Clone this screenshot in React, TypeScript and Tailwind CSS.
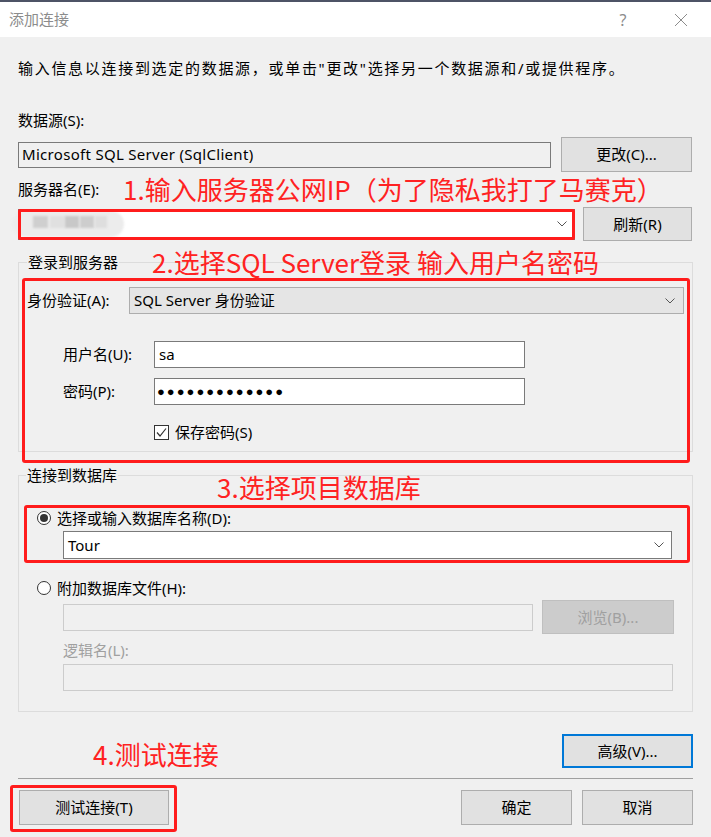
import React from "react";

const ui = { fontFamily: '"Noto Sans", "Noto Sans CJK SC", sans-serif' };
const ann = { fontFamily: '"Noto Sans CJK SC", "Noto Sans", sans-serif' };

function Chevron() {
  return (
    <svg width="10" height="6" viewBox="0 0 10 6" className="shrink-0">
      <polyline points="0.5,0.5 5,5 9.5,0.5" fill="none" stroke="#555" strokeWidth="1" />
    </svg>
  );
}

function Btn({ children, className = "" }: { children: React.ReactNode; className?: string }) {
  return (
    <div
      className={
        "flex items-center justify-center bg-[#e1e1e1] border border-[#adadad] text-[15px] text-black " +
        className
      }
    >
      {children}
    </div>
  );
}

export default function App() {
  return (
    <div className="w-[711px] h-[837px] bg-[#f0f0f0] overflow-hidden text-[15px] text-black" style={ui}>
      <div className="h-[2px] bg-[#4e5366]" />
      <div className="h-[35px] bg-white flex items-center pl-[9px]">
        <span className="text-[15px] text-[#8c8c8c] flex-1">添加连接</span>
        <span className="text-[16px] text-[#8c8c8c] w-[14px] text-center mr-[44px]">?</span>
        <svg width="14" height="14" viewBox="0 0 14 14" className="mr-[23px]">
          <line x1="1" y1="1" x2="13" y2="13" stroke="#8c8c8c" strokeWidth="1" />
          <line x1="13" y1="1" x2="1" y2="13" stroke="#8c8c8c" strokeWidth="1" />
        </svg>
      </div>

      <div className="px-[18px]">
        <div className="mt-[21px] h-[20px] leading-[20px] whitespace-nowrap tracking-[1.7px]">
          输入信息以连接到选定的数据源，或单击"更改"选择另一个数据源和/或提供程序。
        </div>

        <div className="mt-[32px] h-[20px] leading-[20px]">数据源(S):</div>

        <div className="mt-[7px] h-[35px] flex items-center gap-[10px]">
          <div className="w-[533px] h-[26px] border border-[#7a7a7a] bg-[#f0f0f0] flex items-center pl-[3px] text-[15px] tracking-[0.3px]">
            Microsoft SQL Server (SqlClient)
          </div>
          <Btn className="w-[131px] h-[35px]">更改(C)...</Btn>
        </div>

        <div className="mt-[2px] h-[30px] flex items-center">
          <span className="w-[105px] shrink-0">服务器名(E):</span>
          <span className="text-[26px] leading-[30px] text-[#ff2222] whitespace-nowrap" style={ann}>
            1.输入服务器公网IP（为了隐私我打了马赛克）
          </span>
        </div>

        <div className="mt-[3px] h-[34px] flex items-center gap-[8px]">
          <div className="relative w-[557px] h-[31px]">
            <div className="w-full h-full bg-white border border-[#7a7a7a] flex items-center justify-end pr-[7px]">
              <Chevron />
            </div>
            <div className="absolute left-[-6px] top-[2px] w-[112px] h-[26px] rounded-[13px] bg-[#ececec] blur-[1px]" />
            <div className="absolute left-[15px] top-[7px] w-[15px] h-[12px] bg-[#cfcfcf] blur-[1px]" />
            <div className="absolute left-[32px] top-[7px] w-[15px] h-[12px] bg-[#e0e0e0] blur-[1px]" />
            <div className="absolute left-[47px] top-[7px] w-[14px] h-[12px] bg-[#c8c8c8] blur-[1px]" />
            <div className="absolute left-[62px] top-[7px] w-[14px] h-[12px] bg-[#cdcdcd] blur-[1px]" />
            <div className="absolute left-[77px] top-[7px] w-[12px] h-[12px] bg-[#dedede] blur-[1px]" />
            <div className="absolute inset-0 border-[3px] border-[#ff1c1c] rounded-[2px]" />
          </div>
          <Btn className="w-[109px] h-[34px]">刷新(R)</Btn>
        </div>

        {/* Group 1 */}
        <div className="relative mt-[11px]">
          <fieldset className="border border-[#dcdcdc] px-[8px] pb-[11px] pr-[8px]">
            <legend className="px-[1px] h-[20px] leading-[20px]">登录到服务器</legend>
            <div className="mt-[15px] h-[27px] flex items-center">
              <span className="w-[102px]">身份验证(A):</span>
              <div className="flex-1 h-[27px] bg-[#e5e5e5] border border-[#adadad] flex items-center justify-between pl-[4px] pr-[8px]">
                <span>SQL Server 身份验证</span>
                <Chevron />
              </div>
            </div>
            <div className="mt-[27px] h-[27px] flex items-center pl-[36px]">
              <span className="w-[91px]">用户名(U):</span>
              <div className="w-[371px] h-[27px] bg-white border border-[#7a7a7a] flex items-center pl-[4px]">sa</div>
            </div>
            <div className="mt-[10px] h-[27px] flex items-center pl-[36px]">
              <span className="w-[91px]">密码(P):</span>
              <div
                className="w-[371px] h-[27px] bg-white border border-[#7a7a7a] flex items-center pl-[2px] text-[13px] tracking-[2px]"
                style={{ fontFamily: '"Liberation Sans", sans-serif' }}
              >
                ●●●●●●●●●●●●●
              </div>
            </div>
            <div className="mt-[20px] h-[15px] flex items-center pl-[127px]">
              <div className="w-[15px] h-[15px] border border-[#333] bg-white flex items-center justify-center">
                <svg width="11" height="11" viewBox="0 0 11 11">
                  <polyline points="1,5.5 4,9 10,1.5" fill="none" stroke="#333" strokeWidth="1.2" />
                </svg>
              </div>
              <span className="ml-[6px]">保存密码(S)</span>
            </div>
          </fieldset>
          <div className="absolute left-[4px] top-[26px] w-[668px] h-[185px] border-[3px] border-[#ff1c1c] rounded-[3px]" />
          <span
            className="absolute left-[134px] top-[-5px] text-[26px] leading-[30px] text-[#ff2222] whitespace-nowrap"
            style={ann}
          >
            2.选择SQL Server登录 输入用户名密码
          </span>
        </div>

        {/* Group 2 */}
        <div className="relative mt-[13px]">
          <fieldset className="border border-[#dcdcdc] pb-[20px] w-[675px]">
            <legend className="ml-[7px] px-[1px] h-[20px] leading-[20px]">连接到数据库</legend>
            <div className="mt-[20px] ml-[5px] mr-[2px] border-[3px] border-[#ff1c1c] rounded-[3px] pb-[1px]">
              <div className="h-[20px] flex items-center pl-[10px]">
                <div className="w-[14px] h-[14px] rounded-full border border-[#333] bg-white flex items-center justify-center">
                  <div className="w-[8px] h-[8px] rounded-full bg-[#333]" />
                </div>
                <span className="ml-[6px]">选择或输入数据库名称(D):</span>
              </div>
              <div className="mt-[3px] ml-[36px] mr-[15px] h-[28px] bg-white border border-[#7a7a7a] flex items-center justify-between pl-[4px] pr-[7px]">
                <span>Tour</span>
                <Chevron />
              </div>
            </div>
            <div className="mt-[15px] h-[20px] flex items-center pl-[18px]">
              <div className="w-[14px] h-[14px] rounded-full border border-[#333] bg-white" />
              <span className="ml-[6px]">附加数据库文件(H):</span>
            </div>
            <div className="mt-[2px] h-[34px] flex items-center pl-[44px] gap-[9px]">
              <div className="w-[470px] h-[27px] border border-[#cccccc] bg-[#f0f0f0]" />
              <div className="w-[132px] h-[34px] bg-[#cccccc] border border-[#bfbfbf] flex items-center justify-center text-[#a0a0a0]">
                浏览(B)...
              </div>
            </div>
            <div className="mt-[6px] h-[20px] leading-[20px] pl-[44px] text-[#a0a0a0]">逻辑名(L):</div>
            <div className="mt-[4px] ml-[44px] w-[610px] h-[27px] border border-[#cccccc] bg-[#f0f0f0]" />
          </fieldset>
          <span
            className="absolute left-[199px] top-[7px] text-[26px] leading-[30px] text-[#ff2222] whitespace-nowrap"
            style={ann}
          >
            3.选择项目数据库
          </span>
        </div>

        <div className="mt-[22px] h-[34px] flex items-center">
          <span className="ml-[75px] mt-[6px] text-[26px] leading-[30px] text-[#ff2222]" style={ann}>
            4.测试连接
          </span>
          <div className="flex-1" />
          <div className="w-[131px] h-[34px] bg-[#e1e1e1] border-2 border-[#0078d7] flex items-center justify-center">
            高级(V)...
          </div>
        </div>

        <div className="mt-[10px] h-px bg-[#a0a0a0]" />

        <div className="mt-[6px] flex items-start">
          <div className="-ml-[8px] border-[3px] border-[#ff1c1c] rounded-[3px] pl-[6px] pr-[5px] pt-[2px] pb-[4px]">
            <Btn className="w-[150px] h-[35px]">测试连接(T)</Btn>
          </div>
          <div className="flex-1" />
          <div className="mt-[5px] flex gap-[10px]">
            <Btn className="w-[111px] h-[35px]">确定</Btn>
            <Btn className="w-[111px] h-[35px]">取消</Btn>
          </div>
        </div>
      </div>
    </div>
  );
}
